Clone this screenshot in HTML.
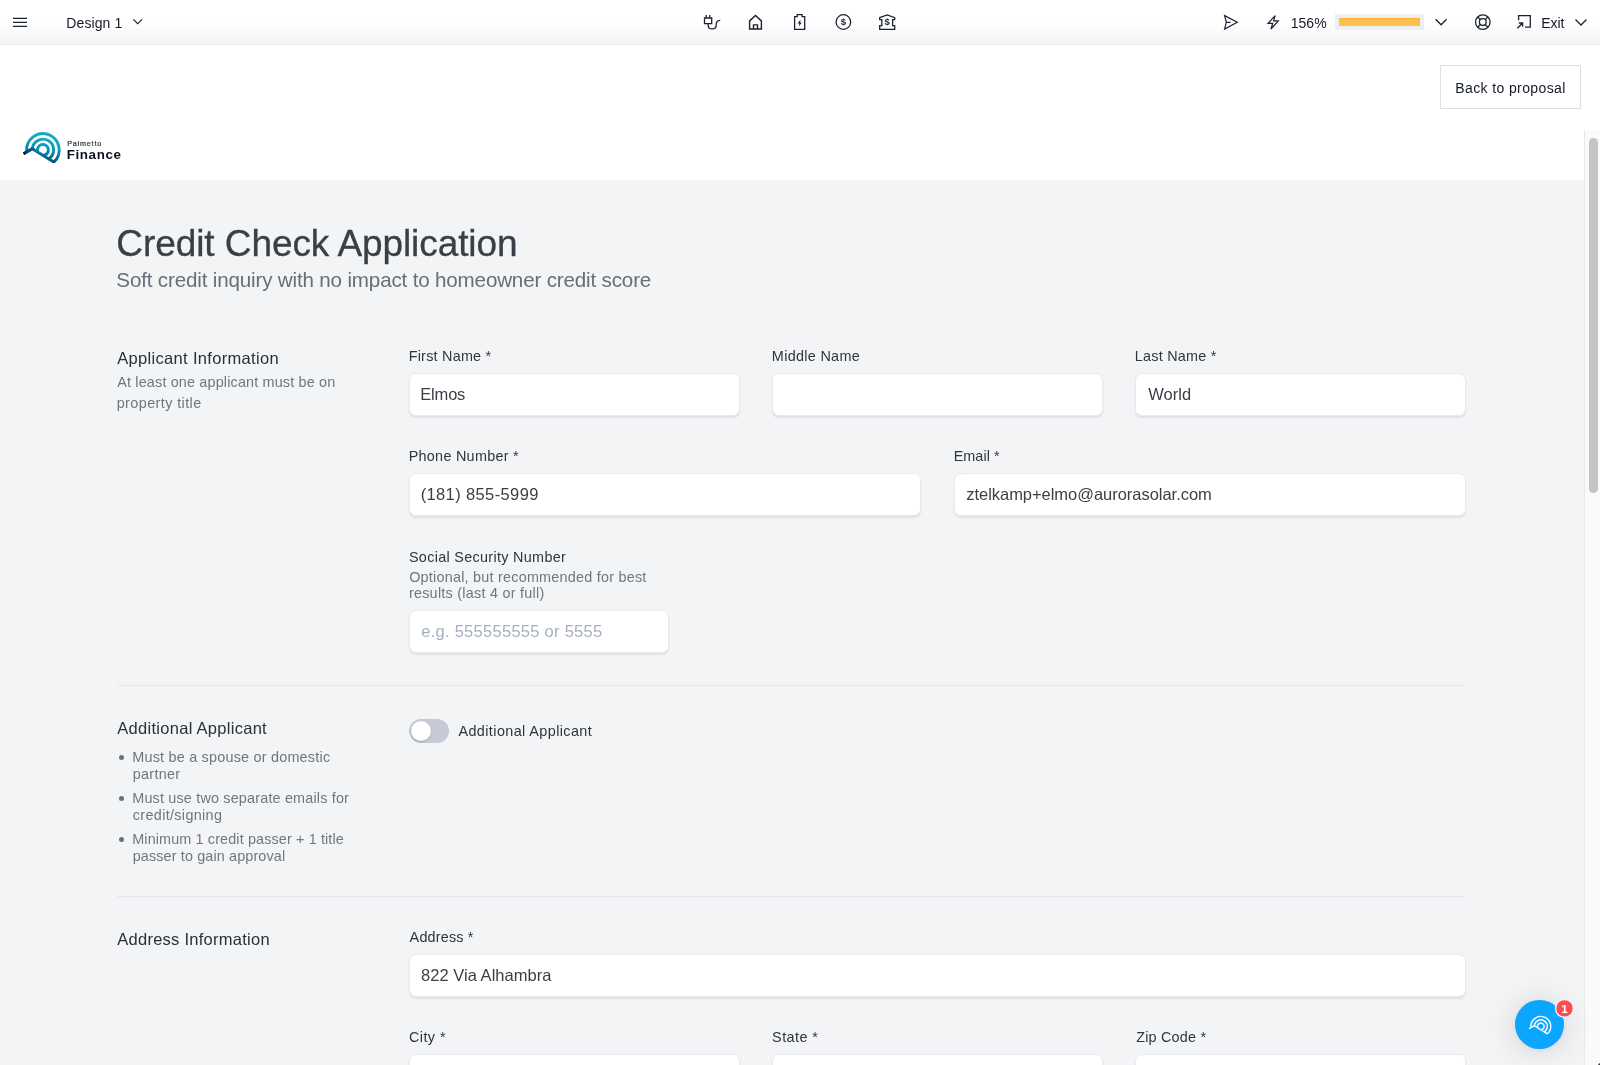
<!DOCTYPE html>
<html lang="en">
<head>
<meta charset="utf-8">
<title>Credit Check Application</title>
<style>
*{box-sizing:border-box;margin:0;padding:0}
html,body{width:1600px;height:1065px;overflow:hidden;background:#fff;font-family:"Liberation Sans",sans-serif;color:#2f343c}
.abs{position:absolute}
#topbar{position:absolute;left:0;top:0;width:1600px;height:45px;border-bottom:1px solid #e8e9e9;background:linear-gradient(to bottom,#fff 0,#fff 22px,#f4f4f4 44px)}
#topbar .t{position:absolute;font-size:14px;line-height:16px;color:#141a27;white-space:nowrap}
#topbar svg{position:absolute;left:0;top:0;overflow:visible}
#backbtn{position:absolute;left:1440px;top:65px;width:141px;height:44.4px;border:1px solid #dde0e4;background:#fff;font-size:14px;line-height:42px;text-align:center;color:#141a27;white-space:nowrap}
#graybg{position:absolute;left:0;top:180px;width:1584px;height:885px;background:#f3f4f6}
#sbar{position:absolute;left:1584px;top:130px;width:16px;height:935px;background:#fafafa;border-left:1px solid #e8e8e8}
#sthumb{position:absolute;left:1589px;top:138px;width:9px;height:355px;border-radius:5px;background:#c4c4c4}
.tx{position:absolute;white-space:nowrap}
.h1{font-size:37px;line-height:40px;color:#3a3e46;-webkit-text-stroke:.3px #3a3e46}
.sub{font-size:20.6px;line-height:24px;color:#686e78}
.sh{font-size:16.5px;line-height:20px;color:#2b3038}
.desc{font-size:14.4px;color:#70767f}
.lab{font-size:14.4px;line-height:16px;color:#30353d}
.inp{position:absolute;height:43.2px;background:#fff;border:1px solid #e8eaed;border-radius:7px;box-shadow:0 2px 1.5px rgba(40,50,70,.085);font-size:16.5px;line-height:41px;padding-left:11.5px;color:#3a3f47;white-space:nowrap;overflow:hidden}
.ph{color:#a5afc2}
.hr{position:absolute;left:117px;width:1348px;height:1px;background:#e5e7ea}
</style>
</head>
<body><div id="wrap" style="position:absolute;left:0;top:0;width:1600px;height:1065px;will-change:transform">
<div id="topbar">
  <div class="t" id="t_design" style="left:66.3px;top:14.6px;letter-spacing:0.105px">Design 1</div>
  <div class="t" id="t_pct" style="left:1290.73px;top:14.6px;letter-spacing:0.024px">156%</div>
  <div class="t" id="t_exit" style="left:1541.2px;top:14.6px;letter-spacing:-0.026px">Exit</div>
  <div class="abs" style="left:1335px;top:14px;width:89px;height:16px;background:#eeeff0"></div>
  <div class="abs" style="left:1339px;top:18px;width:81px;height:8px;background:#fdc050;border-top:1px solid #fdb827"></div>
  <svg width="1600" height="45" viewBox="0 0 1600 45" fill="none" stroke="#1c2230" stroke-width="1.3" stroke-linejoin="miter">
    <!-- hamburger -->
    <path d="M13 18.4H27M13 22.4H27M13 26.4H27" stroke-width="1.4"/>
    <!-- design chevron -->
    <path d="M133.3 19.3L137.7 23.7L142.1 19.3" stroke-width="1.2"/>
    <!-- plug -->
    <path d="M704.5 18H711.7V23.6H704.5ZM706.2 15V18M709.8 15V18M708.1 23.6V25.2C708.1 30.2 716.2 30.2 716.2 25.2V24.4C716.2 21.6 718 20.4 720.2 20.3" stroke-width="1.3"/>
    <!-- home -->
    <path d="M749.6 29V20.9L755.5 15.4L761.4 20.9V29ZM753.5 29V24.9H757.5V29" stroke-width="1.4"/>
    <!-- battery -->
    <path d="M794.6 16.7H797.2V14.7H802.1V16.7H804.7V29.3H794.6Z" stroke-width="1.3"/>
    <path d="M800.6 19.6L797.6 23.4H799.4L798.8 26.4L801.8 22.4H800Z" fill="#1c2230" stroke="none"/>
    <!-- dollar circle -->
    <circle cx="843.4" cy="22" r="7.3" stroke-width="1.3"/>
    <!-- bank -->
    <path d="M879.7 17.6L887.2 14.9L894.7 17.6V19.6H892.6V25.6H894.7V29.3H879.7V25.6H881.8V19.6H879.7Z" stroke-width="1.3"/>
    <!-- send -->
    <path d="M1224.6 15.6L1237.3 22.3L1224.6 29L1226.3 22.3ZM1226.3 22.3H1230.6" stroke-width="1.2"/>
    <!-- bolt -->
    <path d="M1275.2 15.6L1268 23.4H1272.7L1271 29L1278.2 20.9H1273.6Z" stroke-width="1.2"/>
    <!-- chevron 2 -->
    <path d="M1435.6 19.3L1441.1 24.8L1446.6 19.3" stroke-width="1.3"/>
    <!-- lifebuoy -->
    <circle cx="1482.8" cy="22.1" r="7.3" stroke-width="1.3"/>
    <circle cx="1482.8" cy="22.1" r="3.4" stroke-width="1.3"/>
    <path d="M1477.6 16.9L1480.4 19.7M1488 16.9L1485.2 19.7M1477.6 27.3L1480.4 24.5M1488 27.3L1485.2 24.5" stroke-width="1.3"/>
    <!-- exit -->
    <path d="M1518.6 20.2V15.7H1530.3V27.2H1525M1517.4 28.3L1522.4 23.2M1518.8 23H1522.6V26.8" stroke-width="1.3"/>
    <!-- chevron 3 -->
    <path d="M1575.5 19.5L1581 25L1586.5 19.5" stroke-width="1.3"/>
    <text x="843.4" y="25.2" text-anchor="middle" font-family="Liberation Sans, sans-serif" font-weight="bold" font-size="9.5" fill="#1c2230" stroke="none">$</text>
    <text x="887.2" y="25" text-anchor="middle" font-family="Liberation Sans, sans-serif" font-weight="bold" font-size="9.5" fill="#1c2230" stroke="none">$</text>
  </svg>
</div>
<div id="backbtn"><span id="t_back" style="position:relative;left:0.03px;letter-spacing:0.385px;top:1.0px">Back to proposal</span></div>
<div id="graybg"></div>
<div id="sbar"></div>
<div id="sthumb"></div>
<svg class="abs" style="left:0;top:120px;overflow:visible" width="140" height="60" viewBox="0 120 140 60" fill="none">
  <linearGradient id="lg" gradientUnits="userSpaceOnUse" x1="48" y1="131" x2="40" y2="166"><stop offset="0" stop-color="#14aecb"/><stop offset=".42" stop-color="#0c9fbe"/><stop offset=".6" stop-color="#087fa3"/><stop offset=".8" stop-color="#045a82"/><stop offset="1" stop-color="#033a68"/></linearGradient>
  <linearGradient id="lg2" gradientUnits="userSpaceOnUse" x1="32.3" y1="148.8" x2="23.6" y2="153.7"><stop offset="0" stop-color="#05668c"/><stop offset=".5" stop-color="#045080"/><stop offset="1" stop-color="#021648"/></linearGradient>
  <path d="M26.72 151.91 A16.30 16.30 0 1 1 53.77 162.10 M32.27 148.77 A10.70 10.70 0 1 1 48.69 158.95 M37.91 152.27 A5.50 5.50 0 1 1 43.04 155.45 M23.58 153.68 L32.27 148.77 L53.77 162.10" stroke="url(#lg)" stroke-width="2.9" stroke-linejoin="miter" stroke-linecap="butt"/>
  <path d="M23.58 153.68 L32.27 148.77 L34.0 149.85" stroke="url(#lg2)" stroke-width="2.9" stroke-linejoin="miter"/>
</svg>
<div class="tx" id="t_pal" style="left:67.21px;top:138.9px;font-size:7.2px;line-height:9px;color:#2b303b;-webkit-text-stroke:.2px #2b303b;letter-spacing:0.806px">Palmetto</div>
<div class="tx" id="t_fin" style="left:66.64px;top:147.1px;font-size:13.4px;line-height:16px;font-weight:bold;color:#0b1220;letter-spacing:0.624px">Finance</div>

<div class="tx h1" id="h1" style="left:116.35px;top:223.9px;letter-spacing:-0.081px">Credit Check Application</div>
<div class="tx sub" id="sub" style="left:116.37px;top:268.2px;letter-spacing:-0.168px">Soft credit inquiry with no impact to homeowner credit score</div>

<div class="tx sh" id="sh1" style="left:117.27px;top:347.8px;letter-spacing:0.317px">Applicant Information</div>
<div class="tx desc" id="d1a" style="left:117.29px;top:373.5px;line-height:16px;letter-spacing:0.159px">At least one applicant must be on</div>
<div class="tx desc" id="d1b" style="left:116.7px;top:395.11px;line-height:16px;letter-spacing:0.41px">property title</div>

<div class="tx lab" id="l_fn" style="left:408.66px;top:348.4px;letter-spacing:0.234px">First Name *</div>
<div class="tx lab" id="l_mn" style="left:771.84px;top:348.4px;letter-spacing:0.311px">Middle Name</div>
<div class="tx lab" id="l_ln" style="left:1134.84px;top:348.4px;letter-spacing:0.24px">Last Name *</div>
<div class="inp" id="i_fn" style="left:409px;top:372.6px;width:330.5px"><span id="v_fn" style="position:relative;left:-1.22px;letter-spacing:-0.188px;top:0.8px">Elmos</span></div>
<div class="inp" id="i_mn" style="left:772px;top:372.6px;width:330.5px"></div>
<div class="inp" id="i_ln" style="left:1135px;top:372.6px;width:330.5px"><span id="v_ln" style="position:relative;left:0.81px;letter-spacing:0.006px;top:0.8px">World</span></div>

<div class="tx lab" id="l_ph" style="left:408.66px;top:448.3px;letter-spacing:0.279px">Phone Number *</div>
<div class="tx lab" id="l_em" style="left:953.69px;top:448.3px;letter-spacing:0.045px">Email *</div>
<div class="inp" id="i_ph" style="left:409px;top:472.6px;width:511.5px"><span id="v_ph" style="position:relative;left:-0.88px;letter-spacing:0.377px;top:0.8px">(181) 855-5999</span></div>
<div class="inp" id="i_em" style="left:953.5px;top:472.6px;width:512px"><span id="v_em" style="position:relative;left:0.24px;letter-spacing:-0.033px;top:0.8px">ztelkamp+elmo@aurorasolar.com</span></div>

<div class="tx lab" id="l_ssn" style="left:408.95px;top:548.5px;letter-spacing:0.311px">Social Security Number</div>
<div class="tx desc" id="d_ssn1" style="left:409.15px;top:568.6px;line-height:16px;letter-spacing:0.231px">Optional, but recommended for best</div>
<div class="tx desc" id="d_ssn2" style="left:408.89px;top:585.1px;line-height:16px;letter-spacing:0.253px">results (last 4 or full)</div>
<div class="inp ph" id="i_ssn" style="left:409px;top:609.7px;width:259.5px"><span id="v_ssn" style="position:relative;left:-0.32px;letter-spacing:0.275px;top:0.71px">e.g. 555555555 or 5555</span></div>

<div class="hr" style="top:685px"></div>

<div class="tx sh" id="sh2" style="left:117.27px;top:718.2px;letter-spacing:0.285px">Additional Applicant</div>
<div class="abs" style="left:119.4px;top:755.3px;width:5px;height:5px;border-radius:50%;background:#6b717b"></div>
<div class="tx desc" id="b1a" style="left:132.23px;top:749.3px;line-height:16px;letter-spacing:0.218px">Must be a spouse or domestic</div>
<div class="tx desc" id="b1b" style="left:132.7px;top:765.8px;line-height:16px;letter-spacing:0.305px">partner</div>
<div class="abs" style="left:119.4px;top:796.4px;width:5px;height:5px;border-radius:50%;background:#6b717b"></div>
<div class="tx desc" id="b2a" style="left:132.23px;top:790.4px;line-height:16px;letter-spacing:0.178px">Must use two separate emails for</div>
<div class="tx desc" id="b2b" style="left:132.8px;top:806.8px;line-height:16px;letter-spacing:0.336px">credit/signing</div>
<div class="abs" style="left:119.4px;top:837.3px;width:5px;height:5px;border-radius:50%;background:#6b717b"></div>
<div class="tx desc" id="b3a" style="left:132.23px;top:831.2px;line-height:16px;letter-spacing:0.127px">Minimum 1 credit passer + 1 title</div>
<div class="tx desc" id="b3b" style="left:132.7px;top:847.5px;line-height:16px;letter-spacing:0.129px">passer to gain approval</div>

<div class="abs" id="tog" style="left:409px;top:719px;width:40px;height:24px;border-radius:12px;background:#c5cad6"></div>
<div class="abs" id="knob" style="left:411px;top:721px;width:20px;height:20px;border-radius:50%;background:#fff;box-shadow:0 1px 2px rgba(0,0,0,.2)"></div>
<div class="tx lab" id="l_tog" style="left:458.44px;top:722.7px;letter-spacing:0.407px">Additional Applicant</div>

<div class="hr" style="top:896px"></div>

<div class="tx sh" id="sh3" style="left:117.27px;top:928.9px;letter-spacing:0.26px">Address Information</div>
<div class="tx lab" id="l_ad" style="left:409.62px;top:929.3px;letter-spacing:0.182px">Address *</div>
<div class="inp" id="i_ad" style="left:409px;top:953.9px;width:1056.5px"><span id="v_ad" style="position:relative;left:-0.4px;letter-spacing:0.022px;top:0.5px">822 Via Alhambra</span></div>
<div class="tx lab" id="l_ci" style="left:408.91px;top:1029.2px;letter-spacing:0.44px">City *</div>
<div class="tx lab" id="l_st" style="left:772.12px;top:1029.2px;letter-spacing:0.432px">State *</div>
<div class="tx lab" id="l_zp" style="left:1136.15px;top:1029.2px;letter-spacing:0.22px">Zip Code *</div>
<div class="inp" id="i_ci" style="left:409px;top:1053.9px;width:330.5px"></div>
<div class="inp" id="i_st" style="left:772px;top:1053.9px;width:330.5px"></div>
<div class="inp" id="i_zp" style="left:1135px;top:1053.9px;width:330.5px"></div>

<div class="abs" style="left:1515.4px;top:1000.4px;width:48.7px;height:48.7px;border-radius:50%;background:#0ca6ff;box-shadow:0 1px 6px rgba(0,0,0,.06),0 2px 32px rgba(0,0,0,.14)"></div>
<svg class="abs" style="left:1500px;top:990px;overflow:visible" width="100" height="75" viewBox="1500 990 100 75" fill="none">
  <g transform="translate(1514.6 934.8) scale(.611)"><path d="M26.72 151.91 A16.30 16.30 0 1 1 53.77 162.10 M32.27 148.77 A10.70 10.70 0 1 1 48.69 158.95 M37.91 152.27 A5.50 5.50 0 1 1 43.04 155.45 M23.58 153.68 L32.27 148.77 L53.77 162.10" stroke="#fff" stroke-width="2.3" stroke-linejoin="miter"/></g>
  <circle cx="1564.5" cy="1008.4" r="9.6" fill="#f1f2f4"/>
  <circle cx="1564.5" cy="1008.4" r="8.2" fill="#ff4c4f"/>
  <text x="1564.4" y="1012.5" text-anchor="middle" font-family="Liberation Sans, sans-serif" font-weight="bold" font-size="11.5" fill="#fff">1</text>
</svg>

<div class="abs" style="left:1598px;top:1063px;width:3px;height:3px;border-radius:3px 0 0 0;background:#3a3a3a"></div>
</div></body>
</html>
